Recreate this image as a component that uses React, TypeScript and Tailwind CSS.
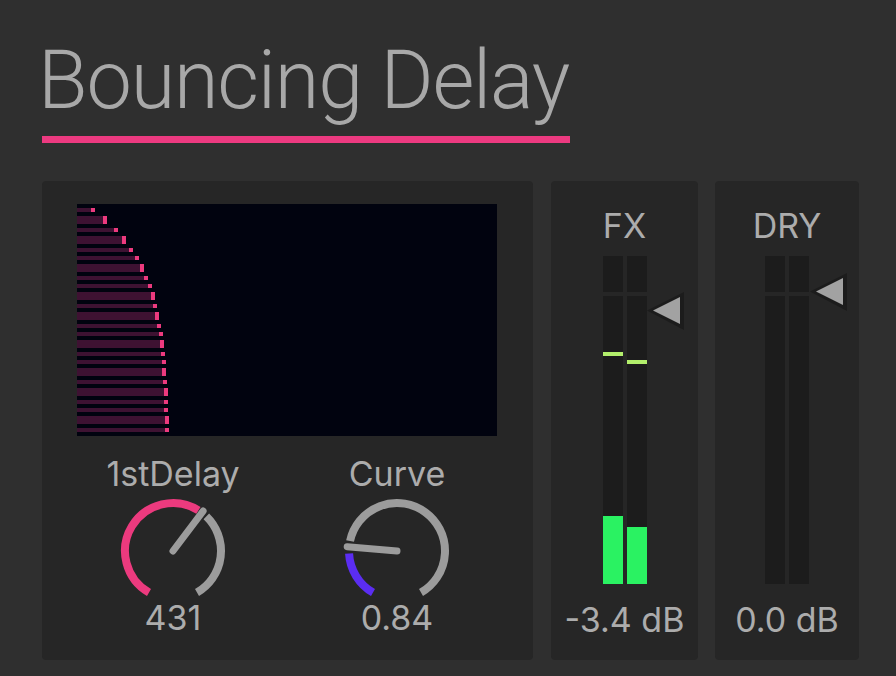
import React from "react";

const font = { fontFamily: "Inter, 'Noto Sans', sans-serif" };
const titleFont = { fontFamily: "Roboto, Inter, sans-serif" };

// [bar width, thick?]
const ROWS: [number, boolean][] = [
  [14, false], [26, true], [37, false], [45, true], [52, false], [58, false],
  [63, true], [67, false], [71, false], [74, true], [76, false], [78, true],
  [80, false], [82, false], [83, true], [84, false], [85, false], [85, true],
  [86, false], [87, true], [87, false], [87, false], [88, true], [88, false],
];

function polar(cx: number, cy: number, r: number, deg: number) {
  const a = (deg * Math.PI) / 180;
  return [cx + r * Math.sin(a), cy - r * Math.cos(a)];
}

function arc(cx: number, cy: number, r: number, from: number, to: number) {
  const [x1, y1] = polar(cx, cy, r, from);
  const [x2, y2] = polar(cx, cy, r, to);
  const large = to - from > 180 ? 1 : 0;
  return `M ${x1} ${y1} A ${r} ${r} 0 ${large} 1 ${x2} ${y2}`;
}

type KnobProps = {
  label: string;
  value: string;
  color: string;
  valueTo: number;
  restFrom: number;
  needle: number;
};

function Knob({ label, value, color, valueTo, restFrom, needle }: KnobProps) {
  const cx = 65;
  const cy = 57;
  const [nx, ny] = polar(cx, cy, 50, needle);
  return (
    <div className="flex w-[130px] flex-col items-center">
      <div className="h-[40px] text-[34px] leading-[40px] text-[#acacac]">{label}</div>
      <svg width="130" height="104" viewBox="0 0 130 104">
        <path d={arc(cx, cy, 48, -150, valueTo)} stroke={color} strokeWidth="8" fill="none" />
        <path d={arc(cx, cy, 48, restFrom, 150)} stroke="#9c9c9c" strokeWidth="8" fill="none" />
        <line x1={cx} y1={cy} x2={nx} y2={ny} stroke="#9c9c9c" strokeWidth="7" strokeLinecap="round" />
      </svg>
      <div className="h-[40px] text-[34px] leading-[40px] text-[#acacac]">{value}</div>
    </div>
  );
}

type MeterProps = {
  label: string;
  value: string;
  peaks?: [number, number];
  levels?: [number, number];
  markerTop: number;
  markerLeft: string;
};

function Meter({ label, value, peaks, levels, markerTop, markerLeft }: MeterProps) {
  return (
    <div className="flex h-[479px] flex-col items-center rounded-[4px] bg-[#262626] pt-[25px]">
      <div className="h-[40px] text-[34px] leading-[40px] text-[#acacac]">{label}</div>
      <div className="relative mt-[10px] flex h-[328px] gap-1">
        {[0, 1].map((i) => (
          <div key={i} className="flex w-[20px] flex-col gap-1">
            <div className="h-[36px] bg-[#1c1c1c]" />
            <div className="relative flex-1 bg-[#1c1c1c]">
              {peaks && (
                <div className="absolute left-0 h-[4px] w-full bg-[#b3ef6c]" style={{ top: peaks[i] }} />
              )}
              {levels && (
                <div className="absolute bottom-0 left-0 w-full bg-[#2af262]" style={{ height: levels[i] }} />
              )}
            </div>
          </div>
        ))}
        <svg
          className={`absolute ${markerLeft}`}
          style={{ top: markerTop }}
          width="37"
          height="38"
          viewBox="0 0 37 38"
        >
          <polygon points="0,18.5 37,0 37,38" fill="#1c1c1c" />
          <polygon points="6,18.5 33,5 33,32" fill="#a2a2a2" />
        </svg>
      </div>
      <div className="mt-[16px] h-[40px] text-[34px] leading-[40px] text-[#acacac]">{value}</div>
    </div>
  );
}

export default function App() {
  return (
    <div className="h-[676px] w-[896px] overflow-hidden bg-[#2f2f2f] pl-[42px] pt-[41px]" style={font}>
      <div
        className="-ml-[4px] h-[80px] text-[81px] font-light leading-[80px] tracking-[-1.2px] text-[#a8a8a8]"
        style={titleFont}
      >
        Bouncing Delay
      </div>
      <div className="mt-[15px] h-[7px] w-[528px] bg-[#ec3a80]" />

      <div className="mt-[38px] flex items-start">
        <div className="flex h-[479px] w-[491px] flex-col rounded-[4px] bg-[#262626] pl-[35px] pt-[23px]">
          <div className="flex h-[232px] w-[420px] flex-col gap-1 bg-[#01030f] py-1">
            {ROWS.map(([w, thick], i) => (
              <div key={i} className={`flex ${thick ? "h-[8px]" : "h-[4px]"}`}>
                <div className="bg-[#3e1232]" style={{ width: w }} />
                <div className="w-[4px] bg-[#ec3a7e]" />
              </div>
            ))}
          </div>
          <div className="mt-[18px] flex gap-[94px] pl-[31px]">
            <Knob label="1stDelay" value="431" color="#ec3a7e" valueTo={32} restFrom={44} needle={37} />
            <Knob label="Curve" value="0.84" color="#5b2df2" valueTo={-93} restFrom={-78} needle={-85} />
          </div>
        </div>

        <div className="ml-[18px] w-[147px]">
          <Meter label="FX" value="-3.4 dB" peaks={[56, 64]} levels={[68, 57]} markerTop={36} markerLeft="left-[44px]" />
        </div>
        <div className="ml-[17px] w-[144px]">
          <Meter label="DRY" value="0.0 dB" markerTop={17} markerLeft="left-[45px]" />
        </div>
      </div>
    </div>
  );
}
